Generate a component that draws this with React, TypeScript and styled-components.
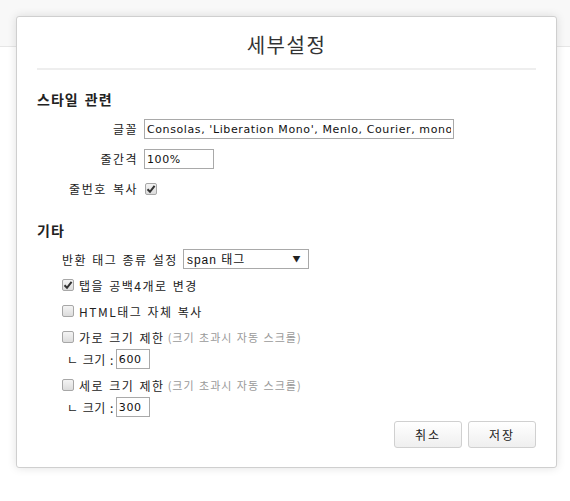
import React from "react";
import styled, { createGlobalStyle } from "styled-components";

const Global = createGlobalStyle`
  html, body { margin: 0; padding: 0; background: #fff; }
  body {
    font-family: "Liberation Sans", "Noto Sans CJK KR", sans-serif;
    font-size: 12px;
    color: #222;
  }
`;

const Page = styled.div`
  position: relative;
  width: 570px;
  height: 501px;
  overflow: hidden;
  background: #fff;
`;

const TopBar = styled.div`
  height: 46px;
  background: #f8f8f8;
  border-bottom: 1px solid #e6e6e6;
`;

const Dialog = styled.div`
  position: absolute;
  top: 16px;
  left: 16px;
  width: 541px;
  height: 452px;
  box-sizing: border-box;
  background: #fff;
  border: 1px solid #cfcfcf;
  border-radius: 3px;
  box-shadow: 0 0 10px rgba(0, 0, 0, 0.12);
  padding: 0 20px 19px;
  display: flex;
  flex-direction: column;
`;

const Title = styled.h1`
  margin: 0;
  padding: 14px 0 9px;
  font-family: "Noto Sans CJK KR", sans-serif;
  font-weight: 400;
  font-size: 20px;
  line-height: 28px;
  color: #333;
  text-align: center;
  letter-spacing: 1.5px;
  border-bottom: 2px solid #eeeeee;
`;

const SectionTitle = styled.h2<{ $top: number }>`
  margin: ${(p) => p.$top}px 0 0;
  font-family: "Noto Sans CJK KR", sans-serif;
  font-weight: 700;
  font-size: 14px;
  line-height: 20px;
  color: #222;
  letter-spacing: 1px;
  word-spacing: 2px;
`;

const FormGrid = styled.div`
  display: grid;
  grid-template-columns: 101px 1fr;
  column-gap: 6px;
  row-gap: 10px;
  margin-top: 10px;
  align-items: center;
`;

const Label = styled.span`
  font-family: "Noto Sans CJK KR", sans-serif;
  font-size: 12px;
  line-height: 20px;
  text-align: right;
  letter-spacing: 1.5px;
  word-spacing: 2px;
  color: #222;
  white-space: nowrap;
`;

const TextInput = styled.input<{ $w: number }>`
  width: ${(p) => p.$w}px;
  height: 20px;
  box-sizing: border-box;
  border: 1px solid #a9a9a9;
  padding: 0 2px;
  margin: 0;
  font-family: "DejaVu Sans", "Liberation Sans", sans-serif;
  font-size: 11px;
  letter-spacing: 0.6px;
  color: #111;
  background: #fff;
  outline: none;
`;

const Box = styled.span`
  display: inline-flex;
  align-items: center;
  justify-content: center;
  width: 12px;
  height: 12px;
  box-sizing: border-box;
  border: 1px solid #a7a7a7;
  border-radius: 2px;
  background: linear-gradient(#f4f4f4, #dcdcdc);
  flex: none;
`;

const Check = ({ checked }: { checked?: boolean }) => (
  <Box>
    {checked && (
      <svg width="10" height="10" viewBox="0 0 10 10">
        <path d="M1.5 5.2 L4 7.8 L8.6 1.8" fill="none" stroke="#333" strokeWidth="2" />
      </svg>
    )}
  </Box>
);

const CheckCell = styled.div`
  display: flex;
  align-items: center;
  height: 20px;
  padding-left: 1px;
`;

const Options = styled.div`
  display: flex;
  flex-direction: column;
  gap: 6px;
  margin-top: 9px;
  padding-left: 25px;
`;

const Row = styled.div`
  display: flex;
  align-items: center;
  height: 20px;
  gap: 5px;
  font-family: "Noto Sans CJK KR", sans-serif;
  font-size: 12px;
  letter-spacing: 1.5px;
  word-spacing: 1px;
  color: #222;
  white-space: nowrap;
`;

const Hint = styled.span`
  color: #9a9a9a;
  font-size: 11px;
  letter-spacing: 1px;
  word-spacing: 1px;
  margin-left: -2px;
`;

const LimitGroup = styled.div`
  display: flex;
  flex-direction: column;
  gap: 2px;
`;

const SizeRow = styled(Row)`
  padding-left: 5px;
  gap: 2px;
  letter-spacing: 0.5px;
`;

const SelectWrap = styled.div`
  position: relative;
  width: 126px;
  height: 20px;
  box-sizing: border-box;
  border: 1px solid #a9a9a9;
  background: #fff;
`;

const Select = styled.select`
  appearance: none;
  -webkit-appearance: none;
  border: none;
  outline: none;
  background: transparent;
  width: 100%;
  height: 18px;
  padding: 0 0 0 3px;
  margin: 0;
  font-family: "Liberation Sans", "Noto Sans CJK KR", sans-serif;
  font-size: 12px;
  letter-spacing: 1px;
  color: #111;
`;

const Arrow = styled.span`
  position: absolute;
  right: 6px;
  top: 3px;
  font-size: 8px;
  line-height: 12px;
  color: #222;
  pointer-events: none;
`;

const Footer = styled.div`
  margin-top: auto;
  display: flex;
  justify-content: flex-end;
  gap: 6px;
`;

const Button = styled.button`
  width: 68px;
  height: 27px;
  box-sizing: border-box;
  border: 1px solid #d0d0d0;
  border-radius: 3px;
  background: linear-gradient(#ffffff, #efefef);
  font-family: "Noto Sans CJK KR", sans-serif;
  font-size: 12px;
  letter-spacing: 2px;
  color: #222;
  padding: 0;
  cursor: pointer;
`;

export default function App() {
  return (
    <Page>
      <Global />
      <TopBar />
      <Dialog>
        <Title>세부설정</Title>

        <SectionTitle $top={19}>스타일 관련</SectionTitle>
        <FormGrid>
          <Label>글꼴</Label>
          <TextInput
            $w={310}
            defaultValue="Consolas, 'Liberation Mono', Menlo, Courier, monospace"
          />
          <Label>줄간격</Label>
          <TextInput $w={70} defaultValue="100%" />
          <Label>줄번호 복사</Label>
          <CheckCell>
            <Check checked />
          </CheckCell>
        </FormGrid>

        <SectionTitle $top={21}>기타</SectionTitle>
        <Options>
          <Row>
            반환 태그 종류 설정
            <SelectWrap>
              <Select defaultValue="span">
                <option value="span">span 태그</option>
                <option value="div">div 태그</option>
              </Select>
              <Arrow>▼</Arrow>
            </SelectWrap>
          </Row>
          <Row>
            <Check checked />
            탭을 공백4개로 변경
          </Row>
          <Row>
            <Check />
            HTML태그 자체 복사
          </Row>
          <LimitGroup>
            <Row>
              <Check />
              가로 크기 제한 <Hint>(크기 초과시 자동 스크롤)</Hint>
            </Row>
            <SizeRow>
              ㄴ 크기 :
              <TextInput $w={34} defaultValue="600" />
            </SizeRow>
          </LimitGroup>
          <LimitGroup>
            <Row>
              <Check />
              세로 크기 제한 <Hint>(크기 초과시 자동 스크롤)</Hint>
            </Row>
            <SizeRow>
              ㄴ 크기 :
              <TextInput $w={34} defaultValue="300" />
            </SizeRow>
          </LimitGroup>
        </Options>

        <Footer>
          <Button>취소</Button>
          <Button>저장</Button>
        </Footer>
      </Dialog>
    </Page>
  );
}
